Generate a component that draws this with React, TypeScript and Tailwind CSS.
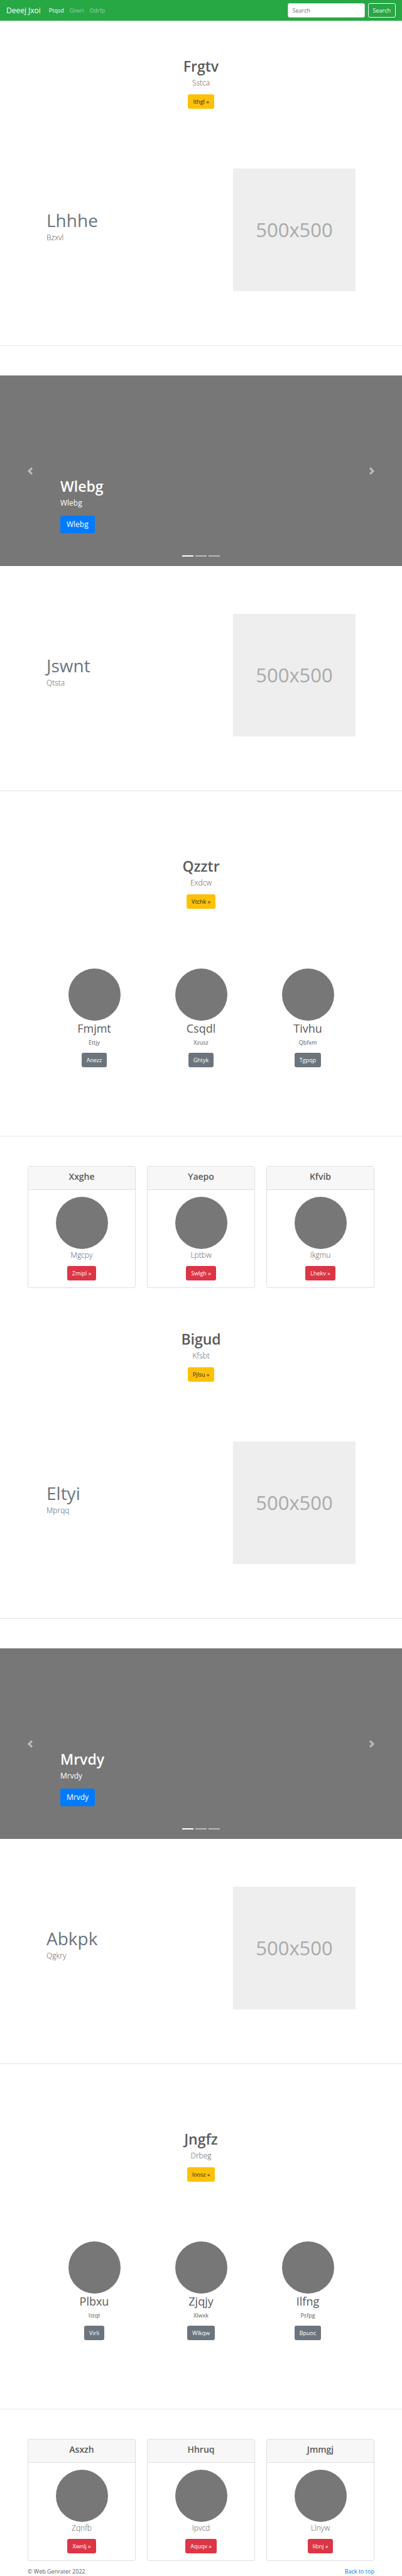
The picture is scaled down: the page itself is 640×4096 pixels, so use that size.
import { ReactNode } from "react";

type Tone = "warning" | "secondary" | "danger";

const tones: Record<Tone, string> = {
  warning: "bg-[#ffc107] text-[#212529]",
  secondary: "bg-[#6c757d] text-white",
  danger: "bg-[#dc3545] text-white",
};

function ActionLink({ tone, children }: { tone: Tone; children: ReactNode }) {
  return (
    <a href="#" className={`flex h-[23px] items-center rounded-[3px] px-2 text-[9px] ${tones[tone]}`}>
      {children}
    </a>
  );
}

function Navbar() {
  return (
    <header>
      <nav className="flex h-[33px] items-center bg-[#28a745] px-[10px] text-[9px] text-white">
        <a href="#" className="text-[12px]">
          Deeej Jxoi
        </a>
        <ul className="ml-[13px] flex gap-[9px]">
          <li>
            <a href="#">Ptqsd</a>
          </li>
          <li>
            <a href="#" className="text-white/50">
              Gtwri
            </a>
          </li>
          <li>
            <a href="#" className="text-white/50">
              Odrfp
            </a>
          </li>
        </ul>
        <form className="ml-auto flex gap-[5px]">
          <input
            type="search"
            aria-label="Search"
            placeholder="Search"
            className="h-[23px] w-[123px] rounded-[3px] border border-[#ced4da] bg-white px-[7px] text-[#495057] placeholder:text-[#6c757d]"
          />
          <button type="button" className="h-[23px] rounded-[3px] border border-[#f8f9fa] px-[7px] text-[#f8f9fa]">
            Search
          </button>
        </form>
      </nav>
    </header>
  );
}

function Intro({ title, text, action }: { title: string; text: string; action: string }) {
  return (
    <section className="flex flex-col items-center pt-[58px] pb-[95px] text-center">
      <h1 className="text-[23px] leading-7 font-semibold">{title}</h1>
      <p className="mt-1 mb-[9px] text-[12px] leading-[18px] font-light">{text}</p>
      <ActionLink tone="warning">{action} »</ActionLink>
    </section>
  );
}

function Divider() {
  return <hr className="mb-[47px] border-t border-[#e5e5e5]" />;
}

function Featurette({ title, text }: { title: string; text: string }) {
  return (
    <section className="flex justify-between px-[74px] pb-[86px]">
      <div className="pt-[65px]">
        <h2 className="text-[28px] leading-[34px] text-[#6c757d]">{title}</h2>
        <p className="mt-[2px] text-[12px] leading-[18px] font-light">{text}</p>
      </div>
      <div
        role="img"
        aria-label="500x500"
        className="flex size-[195px] items-center justify-center bg-[#eeeeee] text-[31px] text-[#aaaaaa]"
      >
        500x500
      </div>
    </section>
  );
}

function Carousel({ title }: { title: string }) {
  return (
    <section className="relative bg-[#777777] px-[15%] pt-[162px] pb-[52px] text-white">
      <h2 className="text-[23px] leading-7 font-semibold">{title}</h2>
      <p className="mt-1 mb-[11px] text-[12px] leading-[18px]">{title}</p>
      <a href="#" className="inline-flex h-7 items-center rounded-[3px] bg-[#007bff] px-[10px] align-top text-[12px]">
        {title}
      </a>
      <button
        type="button"
        aria-label="Previous"
        className="absolute inset-y-0 left-0 flex w-[15%] items-center justify-center opacity-50"
      >
        <svg viewBox="0 0 8 8" className="size-3" fill="#fff">
          <path d="M5.25 0l-4 4 4 4 1.5-1.5-2.5-2.5 2.5-2.5-1.5-1.5z" />
        </svg>
      </button>
      <button
        type="button"
        aria-label="Next"
        className="absolute inset-y-0 right-0 flex w-[15%] items-center justify-center opacity-50"
      >
        <svg viewBox="0 0 8 8" className="size-3" fill="#fff">
          <path d="M2.75 0l-1.5 1.5 2.5 2.5-2.5 2.5 1.5 1.5 4-4-4-4z" />
        </svg>
      </button>
      <div className="absolute inset-x-0 bottom-[15px] flex justify-center gap-[3px]">
        <button type="button" aria-label="Slide 1" className="h-[2px] w-[18px] bg-white" />
        <button type="button" aria-label="Slide 2" className="h-[2px] w-[18px] bg-white/50" />
        <button type="button" aria-label="Slide 3" className="h-[2px] w-[18px] bg-white/50" />
      </div>
    </section>
  );
}

type Item = { title: string; text: string; action: string };

function Circle() {
  return <div className="size-[83px] rounded-full bg-[#777777]" />;
}

function Profiles({ items }: { items: Item[] }) {
  return (
    <section className="grid grid-cols-3 px-[65px] pb-[109px]">
      {items.map((item) => (
        <div key={item.title} className="flex flex-col items-center">
          <Circle />
          <h2 className="mt-px text-[18px] leading-[22px]">{item.title}</h2>
          <p className="mt-[5px] mb-[9px] text-[9px] leading-[14px]">{item.text}</p>
          <ActionLink tone="secondary">{item.action}</ActionLink>
        </div>
      ))}
    </section>
  );
}

function Cards({ items }: { items: Item[] }) {
  return (
    <section className="mb-[9px] grid grid-cols-3 gap-[18px] px-[44px]">
      {items.map((item) => (
        <article key={item.title} className="rounded-[3px] border border-[#dfdfdf] text-center">
          <h3 className="border-b border-[#dfdfdf] bg-[#f7f7f7] pt-2 pb-3 text-[14px] leading-4 font-semibold">
            {item.title}
          </h3>
          <div className="flex flex-col items-center py-[11px]">
            <Circle />
            <p className="mt-px mb-2 text-[12px] leading-[18px] font-light">{item.text}</p>
            <ActionLink tone="danger">{item.action} »</ActionLink>
          </div>
        </article>
      ))}
    </section>
  );
}

export default function App() {
  return (
    <div className="bg-white font-['Open_Sans','Noto_Sans',sans-serif] text-[#5a5a5a]">
      <Navbar />
      <main>
        <Intro title="Frgtv" text="Sstca" action="Ithgl" />
        <Featurette title="Lhhhe" text="Bzxvl" />
        <Divider />
        <Carousel title="Wlebg" />
        <div className="pt-[76px]">
          <Featurette title="Jswnt" text="Qtsta" />
        </div>
        <Divider />
        <Intro title="Qzztr" text="Exdcw" action="Vtchk" />
        <Profiles
          items={[
            { title: "Fmjmt", text: "Ettjy", action: "Aoezz" },
            { title: "Csqdl", text: "Xzusz", action: "Ghtyk" },
            { title: "Tivhu", text: "Qbfxm", action: "Tgpqp" },
          ]}
        />
        <Divider />
        <Cards
          items={[
            { title: "Xxghe", text: "Mgcpy", action: "Zmipl" },
            { title: "Yaepo", text: "Lptbw", action: "Swlgh" },
            { title: "Kfvib", text: "Ikgmu", action: "Lhekv" },
          ]}
        />
        <Intro title="Bigud" text="Kfsbt" action="Pjlsu" />
        <Featurette title="Eltyi" text="Mprqq" />
        <Divider />
        <Carousel title="Mrvdy" />
        <div className="pt-[76px]">
          <Featurette title="Abkpk" text="Qgkry" />
        </div>
        <Divider />
        <Intro title="Jngfz" text="Drbeg" action="Ioosz" />
        <Profiles
          items={[
            { title: "Plbxu", text: "Istqt", action: "Virli" },
            { title: "Zjqjy", text: "Xlwxk", action: "Wlkqw" },
            { title: "Ilfng", text: "Psfpg", action: "Bpuoc" },
          ]}
        />
        <Divider />
        <Cards
          items={[
            { title: "Asxzh", text: "Zqnfb", action: "Xwnlj" },
            { title: "Hhruq", text: "Ipvcd", action: "Aquqv" },
            { title: "Jmmgj", text: "Llnyw", action: "Iibnj" },
          ]}
        />
      </main>
      <footer className="flex justify-between px-[44px] text-[9px] leading-[15px]">
        <p>© Web Genrater 2022</p>
        <a href="#" className="text-[#007bff]">
          Back to top
        </a>
      </footer>
    </div>
  );
}
